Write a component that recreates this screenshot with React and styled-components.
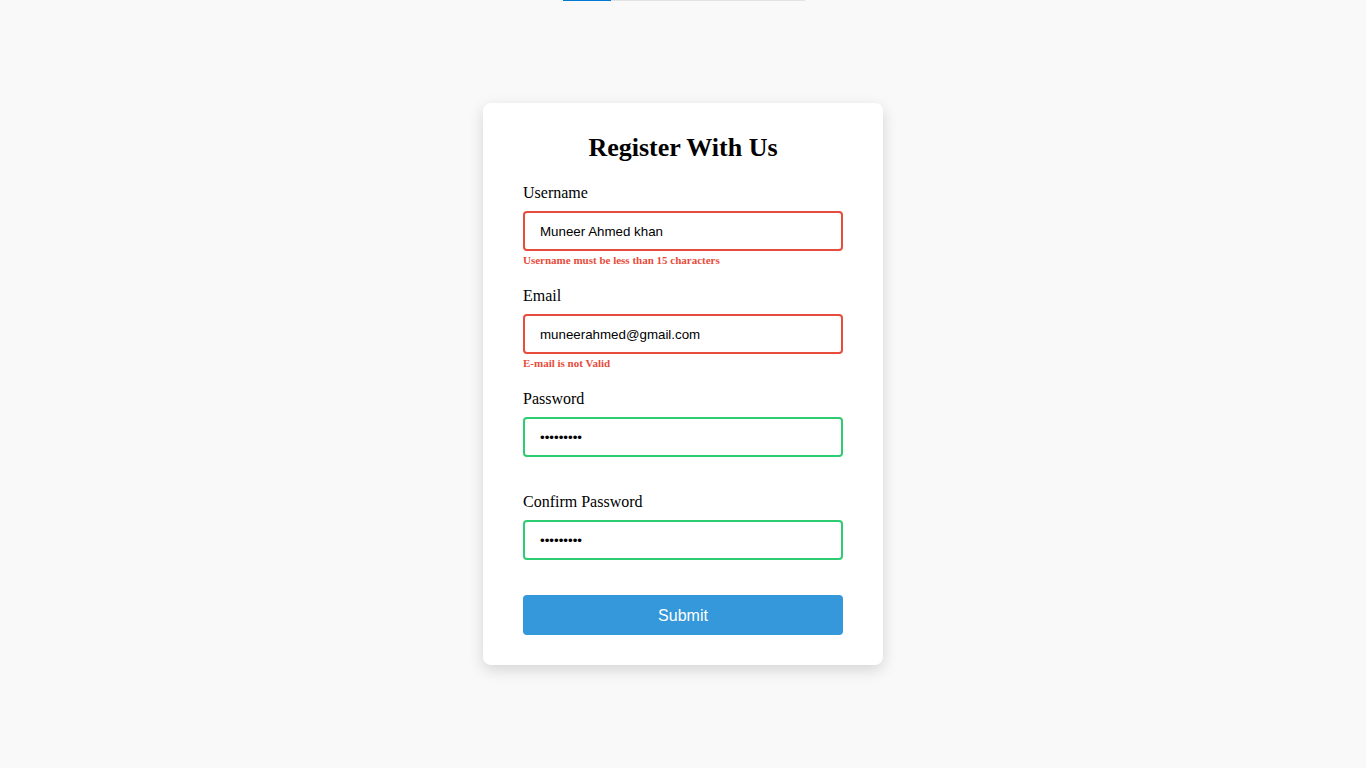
import styled, { createGlobalStyle } from 'styled-components'

const GlobalStyle = createGlobalStyle`
  * {
    box-sizing: border-box;
  }

  body {
    margin: 0;
    background-color: #f9f9f9;
    font-family: "Liberation Serif", "Times New Roman", serif;
  }
`;

const Page = styled.div`
  display: flex;
  align-items: center;
  justify-content: center;
  min-height: 100vh;
`;

// thin progress strip stuck to the top edge of the window
const TopBar = styled.div`
  position: fixed;
  top: 0;
  left: 563px;
  width: 242px;
  height: 1px;
  background-color: #e3e3e3;

  span {
    display: block;
    width: 48px;
    height: 100%;
    background-color: #0078d4;
  }
`;

const Card = styled.div`
  width: 400px;
  background-color: #fff;
  border-radius: 8px;
  box-shadow: 0 5px 15px rgba(0, 0, 0, 0.15);
`;

const Form = styled.form`
  display: flex;
  flex-direction: column;
  padding: 30px 40px;
`;

const Title = styled.h2`
  margin: 0 0 19px;
  padding-top: 1px;
  text-align: center;
  font-size: 26px;
  line-height: 28px;
  font-weight: bold;
  color: #000;
`;

const FormControl = styled.div`
  display: flex;
  flex-direction: column;
  margin-bottom: 17px;

  label {
    display: block;
    font-size: 16px;
    line-height: 18px;
    margin: 3px 0 9px;
    color: #000;
  }

  small {
    display: block;
    margin: 3px 0 1px;
    height: 12px;
    font-size: 11px;
    line-height: 12px;
    font-weight: bold;
    color: #e74c3c;
    white-space: nowrap;
    visibility: ${props => (props.status === 'error' ? 'visible' : 'hidden')};
  }
`;

const Input = styled.input`
  display: block;
  width: 100%;
  height: 40px;
  padding: 0 15px;
  border: 2px solid ${props => (props.status === 'error' ? '#e74c3c' : props.status === 'success' ? '#2ecc71' : '#f0f0f0')};
  border-radius: 4px;
  font-family: "Liberation Sans", Arial, sans-serif;
  font-size: 13.33px;
  color: #000;
  outline: none;
`;

const SubmitBtn = styled.button`
  display: block;
  width: 100%;
  height: 40px;
  margin-top: 2px;
  background-color: #3498db;
  border: none;
  border-radius: 4px;
  color: #fff;
  font-family: "Liberation Sans", Arial, sans-serif;
  font-size: 16px;
  padding-top: 2px;
  cursor: pointer;
`;

const fields = [
  { id: 'username', label: 'Username', type: 'text', value: 'Muneer Ahmed khan', status: 'error', msg: 'Username must be less than 15 characters' },
  { id: 'email', label: 'Email', type: 'text', value: 'muneerahmed@gmail.com', status: 'error', msg: 'E-mail is not Valid' },
  { id: 'password', label: 'Password', type: 'password', value: '123456789', status: 'success', msg: '' },
  { id: 'password2', label: 'Confirm Password', type: 'password', value: '123456789', status: 'success', msg: '' },
];

export default function App() {
  return <>
    <GlobalStyle />
    <TopBar><span /></TopBar>
    <Page>
      <Card>
        <Form onSubmit={e => e.preventDefault()}>
          <Title>Register With Us</Title>
          {fields.map(f => (
            <FormControl key={f.id} status={f.status}>
              <label htmlFor={f.id}>{f.label}</label>
              <Input id={f.id} type={f.type} defaultValue={f.value} status={f.status} />
              <small>{f.msg || 'Error message'}</small>
            </FormControl>
          ))}
          <SubmitBtn type="submit">Submit</SubmitBtn>
        </Form>
      </Card>
    </Page>
  </>
}
